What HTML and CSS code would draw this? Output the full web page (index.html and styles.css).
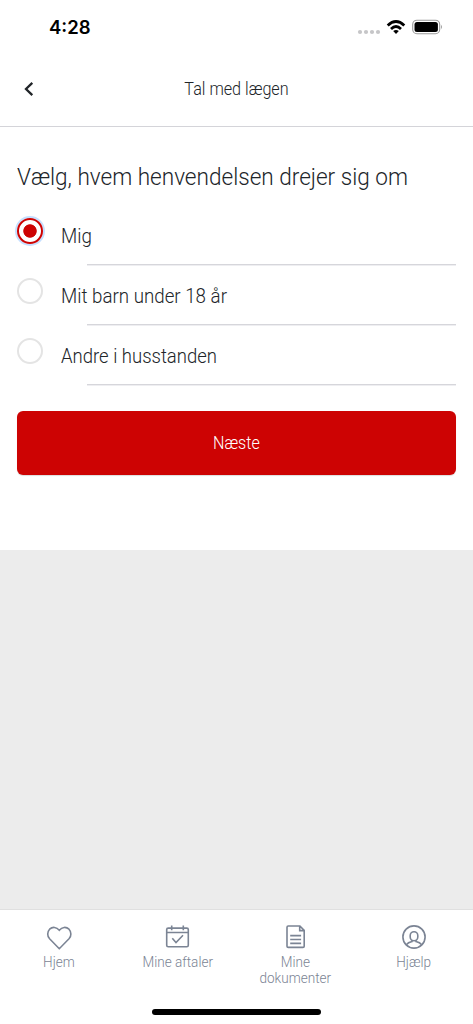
FILE: index.html
```html
<!DOCTYPE html>
<html lang="da">
<head>
<meta charset="utf-8">
<meta name="viewport" content="width=device-width, initial-scale=1">
<title>Tal med lægen</title>
<link rel="stylesheet" href="styles.css">
</head>
<body>
<div class="screen">
  <div class="status">
    <span class="clock">4:28</span>
    <svg class="status-icons" width="86" height="18" viewBox="0 0 86 18">
      <g fill="#c6c6c8"><circle cx="3" cy="14" r="2.1"/><circle cx="9" cy="14" r="2.1"/><circle cx="15" cy="14" r="2.1"/><circle cx="21" cy="14" r="2.1"/></g>
      <g fill="none" stroke="#000" stroke-width="2.8"><path d="M30.7 7.4Q39 -.5 47.300 7.400"/><path d="M34 10.900Q39 6.100 44 10.900"/></g>
      <path d="M36.200 13.100Q39 10.700 41.800 13.100L39 15.900Z"/>
      <rect x="55.700" y="2.200" width="27" height="13.500" rx="4.200" fill="none" stroke="#999" stroke-width="1.100"/>
      <rect x="57.500" y="4" width="23.400" height="10" rx="2.500"/>
      <path d="M84.100 6.800Q86 9 84.100 11.200Z" fill="#999"/>
    </svg>
  </div>
  <header class="header">
    <svg class="back" width="12" height="16" viewBox="0 0 12 16"><path d="M9.300 1.900L3 8L9.300 14.100" fill="none" stroke="#212529" stroke-width="2.300"/></svg>
    <h1 class="title">Tal med lægen</h1>
  </header>
  <main class="content">
    <h2 class="question"><span class="question-text">Vælg, hvem henvendelsen drejer sig om</span></h2>
    <div class="options">
      <label class="option"><span class="radio selected"></span><span class="label mig">Mig</span></label>
      <label class="option"><span class="radio"></span><span class="label barn">Mit barn under 18 år</span></label>
      <label class="option"><span class="radio"></span><span class="label andre">Andre i husstanden</span></label>
    </div>
    <button class="next" type="button"><span class="next-text">Næste</span></button>
  </main>
  <nav class="tabs">
    <a class="tab">
      <svg width="28" height="28" viewBox="0 0 28 28"><path d="M14.300 24.700L4.600 14.800C2 12 2.200 7.700 4.600 5.200C7.500 2.500 11.500 2.900 14.300 6.200C17.100 2.900 21.100 2.500 24 5.200C26.400 7.700 26.600 12 24 14.800Z"/></svg>
      <span class="tab-text">Hjem</span>
    </a>
    <a class="tab">
      <svg width="28" height="28" viewBox="0 0 28 28"><rect x="3.700" y="4.100" width="21.600" height="18.600" rx="1.500"/><path d="M3.700 8.500H25.300M8.700 1.500V6.300M20.300 1.500V6.300M9.300 14.300L13 18.500L20 11.300"/></svg>
      <span class="tab-text">Mine aftaler</span>
    </a>
    <a class="tab">
      <svg width="28" height="28" viewBox="0 0 28 28"><path d="M6.200 2H17.900L22.200 6.400V22.200Q22.200 23.400 21 23.400H6.200Q5 23.400 5 22.200V3.200Q5 2 6.200 2ZM17.700 2V6.600H22.200M8.200 11.600H19.100M8.200 15.500H19.100M8.200 19.400H19.100"/></svg>
      <span class="tab-text">Mine<br>dokumenter</span>
    </a>
    <a class="tab">
      <svg width="28" height="28" viewBox="0 0 28 28"><circle cx="14" cy="13" r="11.100"/><rect x="10.200" y="7.800" width="7.600" height="9" rx="3.700"/><path d="M12 16.300V17.500Q8 18.400 6.300 20.700M16 16.300V17.500Q20 18.400 21.700 20.700"/></svg>
      <span class="tab-text">Hjælp</span>
    </a>
    <span class="home-bar"></span>
  </nav>
</div>
</body>
</html>
```
FILE: styles.css
```css
* { box-sizing: border-box; }
body { margin: 0; background: #ececec; font-family: Roboto, "Liberation Sans", sans-serif; font-weight: 300; color: #212529; }
.screen { display: flex; flex-direction: column; height: 1024px; width: 473px; background: #ececec; }
.status { height: 52px; flex: none; background: #fff; display: flex; justify-content: space-between; padding: 18px 30px 0 49px; }
.clock { font: 600 18.500px/19px Inter, sans-serif; color: #000; }
.header { height: 75px; flex: none; background: #fff; border-bottom: 1px solid #d4d4d9; display: grid; grid-template-columns: 44px 1fr 44px; align-items: center; }
.back { margin-left: 23px; }
.title { margin: 0; text-align: center; font-size: 17.500px; line-height: 20px; font-weight: 300; padding-bottom: 1px; transform: scaleX(.925); }
.content { flex: none; height: 423px; background: #fff; padding: 35px 17px 0; }
.question { margin: 0; height: 44px; font-size: 24px; line-height: 30px; font-weight: 300; white-space: nowrap; }
.question-text { display: inline-block; transform: scaleX(.94); transform-origin: left; }
.option { display: grid; grid-template-columns: 44px auto; justify-content: start; height: 60px; align-items: start; background: linear-gradient(#d6d6db 50%, #eeeef1 50%) 70px 100% / 369px 2px no-repeat; padding-top: 12px; }
.options { margin-bottom: 25px; }
.radio { width: 26px; height: 26px; border: 2px solid #e4e4e4; border-radius: 50%; }
.selected { border-color: #cd0303; background: radial-gradient(circle, #cd0303 6.300px, #fff 7.100px); box-shadow: 0 0 0 2px #c5dfff; }
.label { font-size: 20px; line-height: 24px; padding-top: 6px; white-space: nowrap; transform: scaleX(.937); transform-origin: left; }
.andre { transform: scaleX(.925); }
.next { display: block; width: 439px; height: 64px; padding: 0; border: 0; border-radius: 6px; background: #cd0303; color: #fff; font: 300 17.500px/20px Roboto, sans-serif; box-shadow: 0 1px 1px #ddd; }
.next-text { display: inline-block; transform: scaleX(.92); }
.tabs { position: relative; flex: none; margin-top: auto; height: 115px; border-top: 1px solid #e0e0e0; background: #fff; display: grid; grid-template-columns: repeat(4, 1fr); padding-top: 14px; }
.tab { display: flex; flex-direction: column; align-items: center; color: #7b8494; font-size: 14.500px; line-height: 16px; text-align: center; }
.tab svg { fill: none; stroke: #7b8494; stroke-width: 1.600; margin-bottom: 3px; }
.tab-text { transform: scaleX(.935); }
.home-bar { position: absolute; left: 152px; bottom: 9px; width: 169px; height: 6px; border-radius: 3px; background: #000; }
```
